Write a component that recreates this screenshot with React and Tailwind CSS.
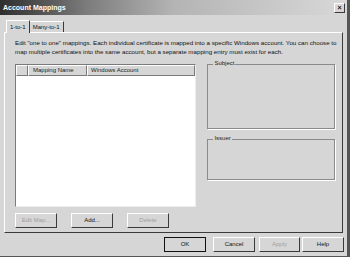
import React from "react";

const font = { fontFamily: '"Liberation Sans", Arial, sans-serif' };

function Btn({ children, disabled, className = "" }) {
  return (
    <div
      className={
        "h-[15px] flex items-center justify-center border border-t-white border-l-white border-b-[#3a3a3a] border-r-[#3a3a3a] bg-[#d6d6d6] text-[6px] " +
        (disabled ? "text-[#a0a0a0] " : "text-[#111] ") +
        className
      }
    >
      {children}
    </div>
  );
}

function Group({ title, className = "" }) {
  return (
    <div className={"relative border border-[#8a8a8a] shadow-[1px_1px_0_#fff] " + className}>
      <span className="absolute -top-[5px] left-[5px] bg-[#d6d6d6] px-[1px] text-[6px] text-[#222] leading-none">
        {title}
      </span>
    </div>
  );
}

export default function App() {
  return (
    <div
      style={font}
      className="w-[350px] h-[257px] bg-[#d6d6d6] flex flex-col border-r-[3px] border-r-[#555] border-b border-b-[#555] overflow-hidden"
    >
      {/* title bar */}
      <div className="h-[15px] bg-[linear-gradient(to_right,#2e2e2e,#7c7c7c_25%,#b4b4b4_50%,#d8d8d8)] flex items-center justify-between pl-[3px] pr-[2px]">
        <span className="text-white font-bold text-[7px] leading-none">Account Mappings</span>
        <div className="w-[11px] h-[10px] bg-[#d6d6d6] border border-t-white border-l-white border-b-[#3a3a3a] border-r-[#3a3a3a] flex items-center justify-center text-[7px] leading-none font-bold text-[#111]">
          ×
        </div>
      </div>

      {/* tabs */}
      <div className="flex items-end pl-[6px] mt-[4px] h-[13px]">
        <div className="h-[13px] px-[3px] flex items-center border border-b-0 border-t-white border-l-white border-r-[#3a3a3a] text-[6px] text-[#111] bg-[#d6d6d6] relative top-[1px] z-10">
          1-to-1
        </div>
        <div className="h-[11px] px-[3px] flex items-center border border-b-0 border-t-white border-l-0 border-r-[#3a3a3a] text-[6px] text-[#111]">
          Many-to-1
        </div>
      </div>

      {/* panel */}
      <div className="mx-[4px] h-[201px] border border-t-white border-l-white border-b-[#3a3a3a] border-r-[#3a3a3a] flex flex-col pl-[10px] pr-[7px] pt-[5px]">
        <p className="text-[6.2px] leading-[9px] text-[#111] whitespace-nowrap">
          Edit "one to one" mappings. Each individual certificate is mapped into a specific Windows account. You can choose to
          <br />
          map multiple certificates into the same account, but a separate mapping entry must exist for each.
        </p>

        <div className="flex mt-[8px] gap-[11px]">
          <div className="w-[182px] h-[143px] bg-white border border-t-[#7a7a7a] border-l-[#7a7a7a] border-b-[#eee] border-r-[#eee] flex flex-col">
            <div className="h-[11px] flex text-[6px] text-[#222]">
              <div className="w-[12px] border border-t-white border-l-white border-b-[#7a7a7a] border-r-[#7a7a7a] bg-[#d6d6d6]" />
              <div className="w-[59px] border border-t-white border-l-white border-b-[#7a7a7a] border-r-[#7a7a7a] bg-[#d6d6d6] pl-[4px] flex items-center">
                Mapping Name
              </div>
              <div className="flex-1 border border-t-white border-l-white border-b-[#7a7a7a] border-r-[#7a7a7a] bg-[#d6d6d6] pl-[3px] flex items-center">
                Windows Account
              </div>
            </div>
          </div>

          <div className="flex flex-col w-[128px] gap-[10px]">
            <Group title="Subject" className="h-[65px]" />
            <Group title="Issuer" className="h-[41px]" />
          </div>
        </div>

        <div className="flex mt-[6px] gap-[14px]">
          <Btn disabled className="w-[42px]">Edit Map...</Btn>
          <Btn className="w-[42px]">Add...</Btn>
          <Btn disabled className="w-[42px]">Delete</Btn>
        </div>
      </div>

      {/* bottom buttons */}
      <div className="flex justify-end pr-[3px] mt-[4px]">
        <Btn className="w-[42px] outline outline-1 outline-[#111] -outline-offset-1 mr-[7px]">OK</Btn>
        <Btn className="w-[42px] mr-[4px]">Cancel</Btn>
        <Btn disabled className="w-[41px] mr-[2px]">Apply</Btn>
        <Btn className="w-[42px]">Help</Btn>
      </div>
    </div>
  );
}
